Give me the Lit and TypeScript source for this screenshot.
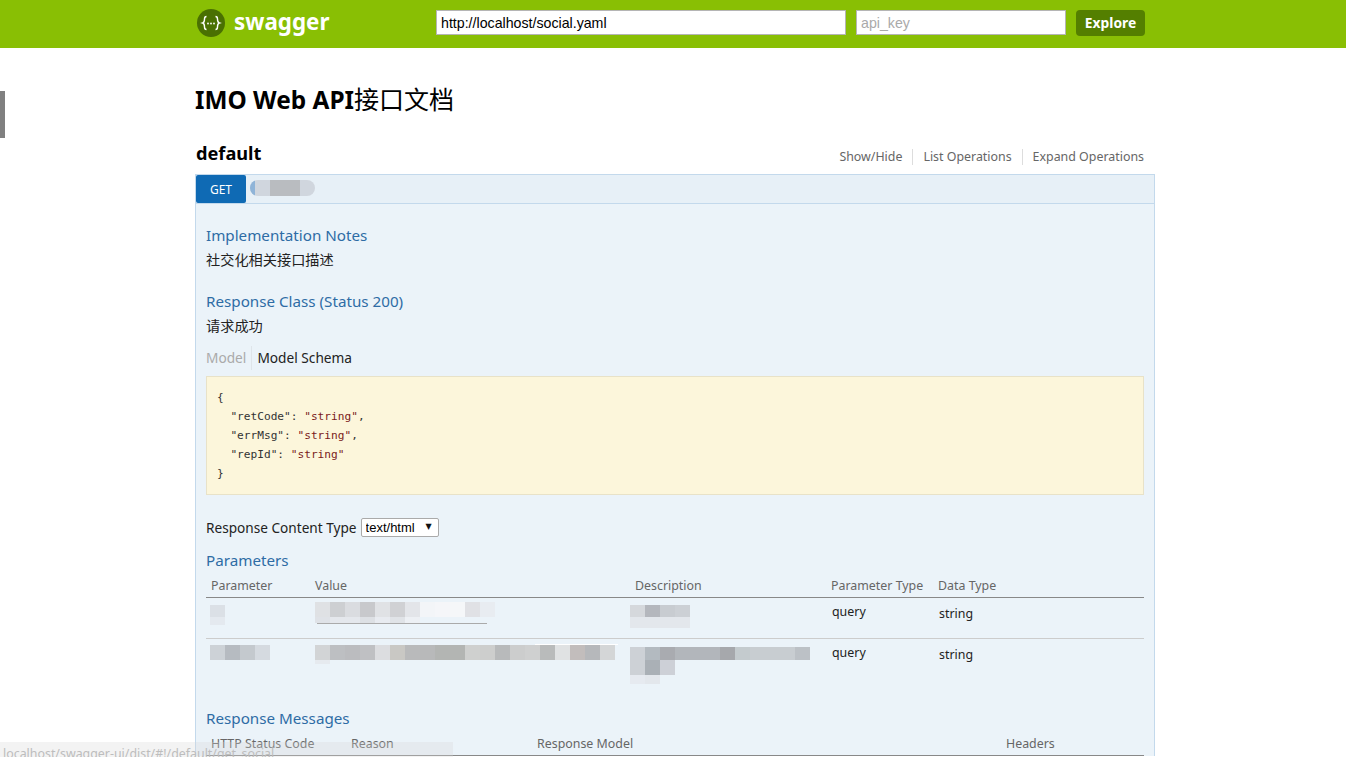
// app.ts - swagger ui page for the social api

import {LitElement, html, css} from 'lit';
import {customElement} from 'lit/decorators.js';

type Mosaic = {offset: number; rows: {h: number; cells: string[]}[]};

const cellRow = (h: number, cells: string[]) => ({h, cells});

const blur = {
  param1: {offset: 4, rows: [cellRow(7, []), cellRow(12, ['#dbe0e6']), cellRow(8, ['#e4e9ef'])]},
  value1: {offset: 5, rows: [
    cellRow(4, []),
    cellRow(15, ['#dfe1e4', '#cdcfd2', '#dadce0', '#c8c9cc', '#e0e2e5', '#d0d1d4', '#e3e5e9', '#f3f5f8', '#f5f6f9', '#f5f7f9', '#e0e1e5', '#e8ecf1']),
    cellRow(6, ['#dfe2e7', '#e4e7ec', '#e4e7ec', '#dde0e4', '#e8ebf0', '#e0e3e7', '#edf0f4']),
  ]},
  desc1: {offset: 0, rows: [
    cellRow(7, []),
    cellRow(12, ['#d5d8dc', '#b4b7bd', '#c8ccd1', '#ccd0d5']),
    cellRow(11, ['#e3e7ec', '#e3e7ec', '#e3e7ec', '#e3e7ec']),
  ]},
  param2: {offset: 4, rows: [cellRow(6, []), cellRow(15, ['#cdd2d7', '#b6bbc1', '#c4c9ce', '#d5dae0'])]},
  value2: {offset: 5, rows: [
    cellRow(15, ['#d2d4d6', '#bdbfc2', '#bbbcbf', '#bfc0c3', '#dcdde0', '#c9c8c4', '#b9babb', '#b8b9ba', '#b3b5b3', '#b3b5b3', '#cfd0cf', '#cdcecd', '#b8babb', '#cccdcd', '#cfd0d0', '#b9bbbb', '#e0e2e3', '#c2bdbc', '#b6b8bb', '#d4d6d7']),
    cellRow(4, ['#e6eaef']),
  ]},
  desc2: {offset: 0, rows: [
    cellRow(8, []),
    cellRow(13, ['#cdd1d6', '#b3bac0', '#a9abb0', '#b2b6bb', '#b2b6bb', '#b2b6bb', '#a6a8ac', '#c4cbce', '#c8cdd1', '#c8cdd1', '#c8cdd1', '#bcc1c6']),
    cellRow(15, ['#cdd1d6', '#aab0b6', '#cdd0d7']),
    cellRow(9, ['#e6eaf0', '#e3e7ec']),
  ]},
} as Record<string, Mosaic>;

@customElement('app-root')
export class AppRoot extends LitElement {
  static styles = css`
    :host {
      display: block;
      position: relative;
      height: 757px;
      overflow: hidden;
      background: #fff;
      font-family: "Noto Sans", "Noto Sans CJK SC", sans-serif;
      color: #000;
    }

    /* header */
    .header {
      height: 48px;
      background: #89bf04;
    }

    .header-inner {
      display: flex;
      align-items: flex-start;
      width: 960px;
      height: 48px;
      padding-top: 10px;
      box-sizing: border-box;
      margin-left: 195px;
    }

    .logo {
      display: flex;
      align-items: center;
      gap: 9px;
      width: 241px;
      height: 28px;
      margin-top: -1px;
      padding-left: 2px;
      box-sizing: border-box;
      color: #fff;
      font-size: 22.4px;
      font-weight: 700;
    }

    .logo span { line-height: 26px; padding-bottom: 2px; }

    .url, .key {
      height: 25px;
      box-sizing: border-box;
      margin: 0;
      padding: 0 4px;
      border: 1px solid #b5b5b5;
      border-radius: 0;
      background: #fff;
      font-family: "Liberation Sans", sans-serif;
      font-size: 14.2px;
      color: #000;
      outline: none;
    }

    .url { width: 410px; }
    .key { width: 210px; margin-left: 10px; }
    .key::placeholder { color: #aaa; }

    .explore {
      width: 69px;
      height: 26px;
      margin-left: 10px;
      padding: 0 0 2px;
      border: 0;
      border-radius: 4px;
      background: #547f00;
      color: #fff;
      font-family: "Noto Sans", sans-serif;
      font-size: 13.8px;
      font-weight: 700;
    }

    /* page */
    .page {
      width: 960px;
      margin-left: 195px;
    }

    h1 {
      margin: 0;
      padding-top: 33px;
      height: 37px;
      font-size: 24.4px;
      line-height: 37px;
      font-weight: 700;
    }

    h1 span { font-weight: 400; font-size: 25px; }

    .resource {
      display: flex;
      justify-content: space-between;
      align-items: flex-end;
      height: 38px;
      margin-top: 18px;
      padding-left: 1px;
      padding-right: 1px;
    }

    h2 {
      margin: 0 0 7px;
      font-size: 18.2px;
      line-height: 28px;
      font-weight: 700;
    }

    .ops {
      display: flex;
      margin-bottom: 9px;
      font-size: 12.4px;
      line-height: 16px;
      color: #666;
    }

    .ops span { padding: 0 10px; border-right: 1px solid #ddd; }
    .ops span:last-child { border-right: 0; }

    /* operation */
    .op {
      border: 1px solid #c3d9ec;
      border-bottom: 0;
      background: #ebf3f9;
    }

    .op-head {
      display: flex;
      height: 28px;
      border-bottom: 1px solid #c3d9ec;
      background: #e7f0f7;
    }

    .method {
      width: 50px;
      border-radius: 2px;
      background: #0f6ab4;
      color: #fff;
      font-size: 12px;
      line-height: 29px;
      text-align: center;
    }

    .path {
      display: flex;
      width: 65px;
      height: 16px;
      margin: 5px 0 0 4px;
      overflow: hidden;
      border-radius: 8px;
      background: #d0d6de;
    }

    .path i { width: 5px; background: #8fb4d8; }
    .path b { width: 30px; margin-left: 15px; background: #b9bcc0; }

    .content { padding: 0 10px; }

    h4 {
      margin: 0 0 1px;
      color: #2e6ca5;
      font-size: 15.2px;
      font-weight: 400;
      line-height: 22px;
    }

    .notes-title { padding-top: 20px; }
    .class-title { padding-top: 17px; }

    .desc {
      margin: 0;
      font-size: 14.2px;
      line-height: 26px;
      color: #222;
    }

    .tabs {
      display: flex;
      height: 24px;
      margin-top: 7px;
      font-size: 13.7px;
      line-height: 24px;
      color: #222;
    }

    .tabs .off {
      padding-right: 5px;
      border-right: 1px solid #dfe5ea;
      color: #aaa;
    }

    .tabs .on { padding-left: 5px; }

    .snippet {
      height: 117px;
      margin: 6px 0 0;
      padding: 0 10px;
      border: 1px solid #e8e2c8;
      background: #fcf6db;
      font-family: "DejaVu Sans Mono", monospace;
      font-size: 11.15px;
      line-height: 19px;
      color: #333;
      white-space: pre;
      display: flex;
      flex-direction: column;
      justify-content: center;
    }

    .snippet em { font-style: normal; color: #7a1a1a; }

    .type {
      display: flex;
      align-items: center;
      gap: 4px;
      height: 20px;
      margin-top: 22px;
      font-size: 13.64px;
      color: #222;
    }

    .select {
      position: relative;
      display: flex;
    }

    select {
      appearance: none;
      width: 78px;
      height: 19px;
      padding: 0 0 0 4px;
      border: 1px solid #aaa;
      border-radius: 2px;
      background: #fff;
      font-family: "Liberation Sans", sans-serif;
      font-size: 13px;
      color: #000;
    }

    .select::after {
      content: "▼";
      position: absolute;
      right: 7px;
      top: 4px;
      font-family: "DejaVu Sans", sans-serif;
      font-size: 8px;
      line-height: 10px;
      color: #111;
      pointer-events: none;
    }

    .params-title { padding-top: 12px; }
    .messages-title { padding-top: 27px; }

    /* tables */
    .grid {
      display: grid;
      grid-template-columns: 104px 320px 196px 107px 1fr;
    }

    .messages { grid-template-columns: 140px 186px 469px 1fr; }

    .th {
      height: 25px;
      padding-left: 5px;
      border-bottom: 1px solid #888;
      color: #666;
      font-size: 12.4px;
      line-height: 28px;
    }

    .tr { height: 40px; border-bottom: 1px solid #ccc; }

    .cell {
      padding-left: 5px;
      color: #222;
      font-size: 12.4px;
    }

    .cell.kind { padding-left: 6px; padding-top: 5px; line-height: 18px; }
    .cell.data { padding-left: 6px; padding-top: 7px; line-height: 18px; }
    .cell.blurred { padding-left: 0; position: relative; }
    .row2 .cell.blurred { height: 86px; }

    .blur-row { display: flex; }
    .blur-row i { display: block; width: 15px; flex: none; }

    .tr.last { border-bottom: 0; height: 41px; }

    .value-line {
      width: 170px;
      margin-left: 7px;
      border-bottom: 1px solid #aaa;
    }

    .top-line {
      width: 83px;
      height: 1px;
      margin: 5px 0 0 225px;
      background: #fff;
    }

    /* things lying over the page */
    .edge {
      position: absolute;
      left: 0;
      top: 91px;
      width: 5px;
      height: 47px;
      background: #808080;
    }

    .status {
      position: absolute;
      left: 0;
      bottom: 0;
      width: 453px;
      height: 15px;
      overflow: hidden;
      background: rgba(215, 215, 215, 0.3);
      color: #bdbdbd;
      font-size: 12.4px;
      line-height: 23px;
      padding-left: 3px;
      box-sizing: border-box;
      white-space: nowrap;
    }
  `;

  mosaic(m: Mosaic) {
    return html`<div style="margin-left:${m.offset}px">
      ${m.rows.map((r) => html`
        <div class="blur-row" style="height:${r.h}px">
          ${r.cells.map((c) => html`<i style="background:${c}"></i>`)}
        </div>`)}
    </div>`;
  }

  render() {
    return html`
      <div class="header">
        <div class="header-inner">
          <div class="logo">
            <svg width="28" height="28" viewBox="0 0 28 28">
              <circle cx="14" cy="14" r="14" fill="#4a7002"></circle>
              <g fill="none" stroke="#fff" stroke-width="1.4">
                <path d="M9.5 7.5c-2 0-2 1-2 2.5s0 3.5-1.8 4c1.800.5 1.800 2.500 1.800 4s0 2.500 2 2.500"></path>
                <path d="M18.500 7.500c2 0 2 1 2 2.500s0 3.500 1.800 4c-1.800.5-1.800 2.500-1.800 4s0 2.500-2 2.500"></path>
              </g>
              <g fill="#fff">
                <circle cx="11" cy="14.500" r="0.900"></circle>
                <circle cx="14" cy="14.500" r="0.900"></circle>
                <circle cx="17" cy="14.500" r="0.900"></circle>
              </g>
            </svg>
            <span>swagger</span>
          </div>
          <input class="url" value="http://localhost/social.yaml" />
          <input class="key" placeholder="api_key" />
          <button class="explore">Explore</button>
        </div>
      </div>

      <div class="page">
        <h1>IMO Web API<span>接口文档</span></h1>

        <div class="resource">
          <h2>default</h2>
          <div class="ops">
            <span>Show/Hide</span>
            <span>List Operations</span>
            <span>Expand Operations</span>
          </div>
        </div>

        <div class="op">
          <div class="op-head">
            <div class="method">GET</div>
            <div class="path"><i></i><b></b></div>
          </div>
          <div class="content">
            <h4 class="notes-title">Implementation Notes</h4>
            <p class="desc">社交化相关接口描述</p>
            <h4 class="class-title">Response Class (Status 200)</h4>
            <p class="desc">请求成功</p>
            <div class="tabs">
              <span class="off">Model</span>
              <span class="on">Model Schema</span>
            </div>
            <div class="snippet"><div>{</div><div>  "retCode": <em>"string"</em>,</div><div>  "errMsg": <em>"string"</em>,</div><div>  "repId": <em>"string"</em></div><div>}</div></div>
            <div class="type">
              <span>Response Content Type</span>
              <div class="select"><select><option>text/html</option></select></div>
            </div>

            <h4 class="params-title">Parameters</h4>
            <div class="grid">
              <div class="th">Parameter</div>
              <div class="th">Value</div>
              <div class="th">Description</div>
              <div class="th">Parameter Type</div>
              <div class="th">Data Type</div>
            </div>
            <div class="grid tr">
              <div class="cell blurred">${this.mosaic(blur.param1)}</div>
              <div class="cell blurred">${this.mosaic(blur.value1)}<div class="value-line"></div></div>
              <div class="cell blurred">${this.mosaic(blur.desc1)}</div>
              <div class="cell kind">query</div>
              <div class="cell data">string</div>
            </div>
            <div class="grid tr last row2">
              <div class="cell blurred">${this.mosaic(blur.param2)}</div>
              <div class="cell blurred">
                <div class="top-line"></div>
                ${this.mosaic(blur.value2)}
              </div>
              <div class="cell blurred">${this.mosaic(blur.desc2)}</div>
              <div class="cell kind">query</div>
              <div class="cell data">string</div>
            </div>

            <h4 class="messages-title">Response Messages</h4>
            <div class="grid messages">
              <div class="th">HTTP Status Code</div>
              <div class="th">Reason</div>
              <div class="th">Response Model</div>
              <div class="th">Headers</div>
            </div>
          </div>
        </div>
      </div>

      <div class="edge"></div>
      <div class="status">localhost/swagger-ui/dist/#!/default/get_social</div>
    `;
  }
}
